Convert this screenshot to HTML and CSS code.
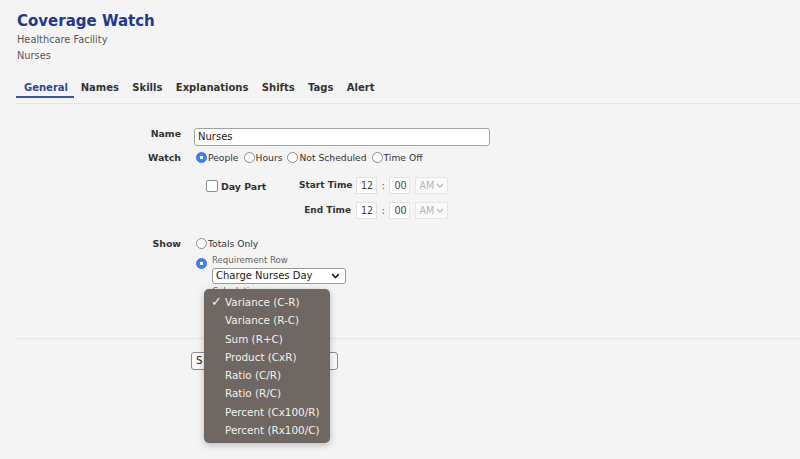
FILE: index.html
```html
<!DOCTYPE html>
<html lang="en">

<head>
    <meta charset="UTF-8">
    <meta name="viewport" content="width=device-width, initial-scale=1.0">
    <title>Coverage Watch</title>
    <link rel="stylesheet" href="styles.css">
</head>

<body>
    <div class="page">
        <header class="head">
            <h1>Coverage Watch</h1>
            <div class="sub">Healthcare Facility</div>
            <div class="sub">Nurses</div>
        </header>

        <nav class="tabs">
            <a class="tab active">General</a>
            <a class="tab">Names</a>
            <a class="tab">Skills</a>
            <a class="tab">Explanations</a>
            <a class="tab">Shifts</a>
            <a class="tab">Tags</a>
            <a class="tab">Alert</a>
        </nav>

        <form class="watch-form">
            <div class="row row-name">
                <label class="lbl">Name</label>
                <div class="field">
                    <input class="text-input" type="text" value="Nurses">
                </div>
            </div>

            <div class="row row-watch">
                <span class="lbl">Watch</span>
                <div class="field radios">
                    <label class="opt"><span class="radio on"></span>People</label>
                    <label class="opt"><span class="radio"></span>Hours</label>
                    <label class="opt"><span class="radio"></span>Not Scheduled</label>
                    <label class="opt"><span class="radio"></span>Time Off</label>
                </div>
            </div>

            <div class="row row-times">
                <span class="lbl"></span>
                <div class="field times">
                    <label class="daypart"><span class="check"></span>Day Part</label>
                    <span class="time-lbl">Start Time</span>
                    <div class="time">
                        <span class="tbox">12</span>
                        <span class="colon">:</span>
                        <span class="tbox">00</span>
                        <span class="ampm">AM
                            <svg width="8" height="5" viewBox="0 0 8 5"><path d="M1 1l3 3 3-3" fill="none" stroke="#b9b9b9" stroke-width="1.3"/></svg>
                        </span>
                    </div>
                    <span></span>
                    <span class="time-lbl">End Time</span>
                    <div class="time">
                        <span class="tbox">12</span>
                        <span class="colon">:</span>
                        <span class="tbox">00</span>
                        <span class="ampm">AM
                            <svg width="8" height="5" viewBox="0 0 8 5"><path d="M1 1l3 3 3-3" fill="none" stroke="#b9b9b9" stroke-width="1.3"/></svg>
                        </span>
                    </div>
                </div>
            </div>

            <div class="row row-show">
                <span class="lbl">Show</span>
                <div class="field">
                    <label class="opt"><span class="radio"></span>Totals Only</label>
                    <div class="req">
                        <span class="radio on"></span>
                        <div class="req-body">
                            <div class="hint">Requirement Row</div>
                            <div class="select">Charge Nurses Day
                                <svg width="9" height="6" viewBox="0 0 9 6"><path d="M1.2 1.2l3.3 3.3 3.3-3.3" fill="none" stroke="#222" stroke-width="1.7"/></svg>
                            </div>
                            <div class="hint">Calculation</div>
                            <!-- its value sits under the open menu below -->
                            <div class="select calc"></div>
                        </div>
                    </div>
                </div>
            </div>
        </form>

        <div class="divider"></div>

        <div class="actions">
            <button class="btn save" type="button">S</button>
            <button class="btn close" type="button"></button>
        </div>

        <!-- open menu of the Calculation select -->
        <ul class="menu">
            <li><span class="tick">✓</span>Variance (C-R)</li>
            <li><span class="tick"></span>Variance (R-C)</li>
            <li><span class="tick"></span>Sum (R+C)</li>
            <li><span class="tick"></span>Product (CxR)</li>
            <li><span class="tick"></span>Ratio (C/R)</li>
            <li><span class="tick"></span>Ratio (R/C)</li>
            <li><span class="tick"></span>Percent (Cx100/R)</li>
            <li><span class="tick"></span>Percent (Rx100/C)</li>
        </ul>
    </div>
</body>

</html>
```

FILE: styles.css
```css
body {
    margin: 0;
    background-color: #f4f4f4;
    font-family: 'DejaVu Sans', sans-serif;
    color: #333;
}

.page {
    position: relative;
    height: 459px;
    overflow: hidden;
}

/* header */
.head {
    padding: 11px 0 0 17px;
}

.head h1 {
    margin: 0;
    font-size: 15px;
    line-height: 20px;
    font-weight: bold;
    color: #21398a;
}

.sub {
    font-size: 9.8px;
    line-height: 16px;
    color: #555;
}

.sub:first-of-type {
    margin-top: 1px;
}

/* tabs */
.tabs {
    display: flex;
    margin: 17px 0 0 16px;
    padding-bottom: 5px;
    border-bottom: 1px solid #e4e4e4;
}

.tab {
    padding: 0 6.7px 1px;
    font-size: 10px;
    line-height: 14px;
    font-weight: bold;
    color: #333;
    border-bottom: 2px solid transparent;
}

.tab.active {
    padding: 0 6px 1px 8px;
    color: #2c4a98;
    border-bottom-color: #3a55a4;
}

/* form */
.watch-form {
    margin-top: 21px;
    padding-left: 100px;
}

.row {
    display: flex;
}

.lbl {
    width: 94px;
    padding-right: 13px;
    box-sizing: border-box;
    text-align: right;
    font-size: 9.4px;
    font-weight: bold;
    color: #333;
}

.row-name .lbl {
    line-height: 18px;
}

.text-input {
    width: 296px;
    height: 18px;
    box-sizing: border-box;
    margin: 0;
    padding: 0 3px;
    border: 1px solid #a2a2a2;
    border-radius: 3px;
    background: #fff;
    font-family: 'DejaVu Sans', sans-serif;
    font-size: 10px;
    color: #222;
}

.row-watch {
    margin-top: 5px;
    line-height: 14px;
}

.radios {
    display: flex;
    gap: 3px;
}

.opt {
    display: flex;
    align-items: center;
    gap: 1px;
    font-size: 9.2px;
    line-height: 14px;
    color: #333;
}

.radio {
    display: inline-block;
    width: 9px;
    height: 9px;
    margin-left: 2px;
    border: 1px solid #8c8c8c;
    border-radius: 50%;
    background: #fff;
    flex-shrink: 0;
}

.radio.on {
    border-color: #2f73e6;
    background: radial-gradient(circle, #fff 0 1.5px, #3a82f7 2px);
}

/* day part and times */
.row-times {
    margin-top: 12px;
}

.times {
    display: grid;
    grid-template-columns: 100px 52px auto;
    grid-auto-rows: 17px;
    column-gap: 5px;
    row-gap: 8px;
    align-items: center;
}

.daypart {
    display: flex;
    align-items: center;
    gap: 3px;
    padding: 2px 0 0 12px;
    font-size: 9.4px;
    font-weight: bold;
}

.check {
    width: 10px;
    height: 10px;
    border: 1px solid #8c8c8c;
    border-radius: 2px;
    background: #fff;
}

.time-lbl {
    text-align: right;
    font-size: 9px;
    font-weight: bold;
    white-space: nowrap;
}

.time {
    display: flex;
    align-items: center;
    height: 17px;
}

.tbox {
    width: 21px;
    height: 17px;
    box-sizing: border-box;
    padding-left: 4px;
    border: 1px solid #e2e2e2;
    background: #fff;
    font-size: 9.6px;
    line-height: 15px;
    color: #444;
}

.colon {
    margin: 0 4.5px;
    font-size: 10px;
    color: #555;
}

.ampm {
    display: flex;
    align-items: center;
    gap: 2px;
    width: 33px;
    height: 17px;
    box-sizing: border-box;
    margin-left: 5px;
    padding-left: 3px;
    border: 1px solid #e6e6e6;
    background: #fafafa;
    font-size: 9.6px;
    color: #b5b5b5;
}

/* show */
.row-show {
    margin-top: 18px;
}

.row-show .lbl {
    line-height: 14px;
}

.req {
    display: flex;
    gap: 5px;
    margin-top: 4px;
}

.req .radio {
    margin-top: 3px;
}

.hint {
    font-size: 8.6px;
    line-height: 11px;
    color: #666;
}

.select {
    display: flex;
    align-items: center;
    justify-content: space-between;
    width: 134px;
    height: 16px;
    box-sizing: border-box;
    margin: 2px 0 2px;
    padding: 0 5px 0 3px;
    border: 1px solid #9a9a9a;
    border-radius: 3px;
    background: #fff;
    font-size: 10px;
    color: #222;
}

.select.calc {
    width: 110px;
}

.divider {
    margin: 21px 0 0 15px;
    border-top: 1px solid #e3e3e3;
}

.actions {
    display: flex;
    gap: 4px;
    margin-top: 13px;
    padding-left: 191px;
}

.btn {
    height: 18px;
    padding: 0 4px;
    border: 1px solid #8d8d8d;
    border-radius: 3px;
    background: #fbfbfb;
    font-family: 'DejaVu Sans', sans-serif;
    font-size: 10px;
    color: #222;
}

.btn.save {
    width: 60px;
    text-align: left;
}

.btn.close {
    width: 83px;
}

/* dropdown menu */
.menu {
    position: absolute;
    left: 204px;
    top: 289px;
    width: 126px;
    height: 154px;
    box-sizing: border-box;
    margin: 0;
    padding: 4px 0 0;
    list-style: none;
    background-color: #6f6762;
    border-radius: 5px;
    box-shadow: 0 2px 7px rgba(0, 0, 0, 0.25);
}

.menu li {
    display: flex;
    font-size: 10.4px;
    line-height: 18.3px;
    color: #f4f0ec;
    white-space: nowrap;
}

.tick {
    width: 14px;
    margin-left: 7px;
    font-size: 13px;
    line-height: 18px;
}
```
